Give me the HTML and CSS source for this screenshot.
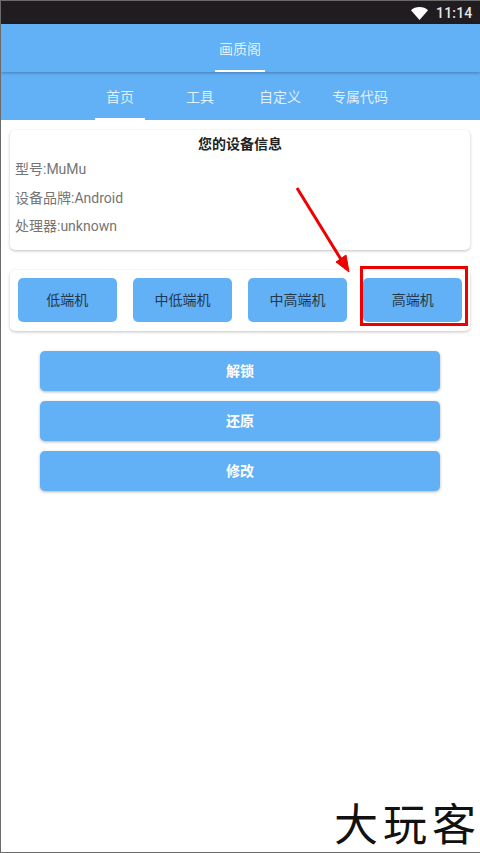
FILE: index.html
```html
<!DOCTYPE html>
<html lang="zh">
<head>
<meta charset="utf-8">
<title>画质阁</title>
<link rel="stylesheet" href="styles.css">
</head>
<body>
<div class="screen">
  <div class="status">
    <svg class="wifi" width="17" height="13" viewBox="0 0 17 13"><path d="M0 3.2C2.2 1.2 5.2 0 8.5 0s6.300 1.200 8.500 3.200L8.500 13z" fill="#fff"/></svg>
    <span class="time">11:14</span>
  </div>
  <div class="appbar"><div class="tab tab-title active">画质阁</div></div>
  <nav class="tabs">
    <div class="tab active">首页</div>
    <div class="tab">工具</div>
    <div class="tab">自定义</div>
    <div class="tab">专属代码</div>
  </nav>
  <main class="content">
    <section class="card info">
      <h1 class="info-title">您的设备信息</h1>
      <p class="info-row first">型号:MuMu</p>
      <p class="info-row">设备品牌:Android</p>
      <p class="info-row">处理器:unknown</p>
    </section>
    <section class="card tiers">
      <div class="tier">低端机</div>
      <div class="tier">中低端机</div>
      <div class="tier">中高端机</div>
      <div class="tier">高端机</div>
    </section>
    <div class="actions">
      <div class="action">解锁</div>
      <div class="action">还原</div>
      <div class="action">修改</div>
    </div>
  </main>
  <div class="mark-box"></div>
  <svg class="mark-arrow" width="70" height="95" viewBox="0 0 70 95">
    <path d="M5 2 L50 75" stroke="#f00000" stroke-width="3" fill="none"/>
    <path d="M57 86 L44 76 L54 69 Z" fill="#f00000" stroke="#f00000" stroke-width="1"/>
  </svg>
  <div class="watermark">大玩客</div>
</div>
</body>
</html>
```
FILE: styles.css
```css
* { box-sizing: border-box; }
html, body { margin: 0; padding: 0; }
body {
  width: 480px;
  height: 853px;
  overflow: hidden;
  background: #fff;
  font-family: Roboto, "Noto Sans CJK SC", sans-serif;
}
.screen {
  position: relative;
  width: 480px;
  height: 853px;
  border: 1px solid #6b6b6b;
  border-right: 0;
  background: #fff;
  overflow: hidden;
}
.status {
  height: 23px;
  background: #201c20;
  display: flex;
  align-items: center;
  justify-content: flex-end;
  padding-right: 8px;
}
.wifi { margin-right: 8px; margin-top: 1px; }
.time {
  color: #e6e6e6;
  font-size: 14px;
  font-weight: 500;
  letter-spacing: 0.2px;
  width: 35px;
  margin-right: 1px;
}
.appbar {
  height: 48px;
  background: #62b0f6;
  display: flex;
  justify-content: center;
  box-shadow: 0 1px 3px rgba(0, 0, 0, .28);
  position: relative;
}
.tabs {
  height: 48px;
  background: #62b0f6;
  display: flex;
  justify-content: center;
  padding-right: 1px;
}
.tab {
  width: 80px;
  height: 48px;
  display: flex;
  align-items: center;
  justify-content: center;
  padding-bottom: 1px;
  color: rgba(255, 255, 255, .82);
  font-size: 14px;
  position: relative;
}
.appbar .tab { padding-bottom: 0; }
.tab.active::after {
  content: "";
  position: absolute;
  left: 15px;
  bottom: 0;
  width: 50px;
  height: 2px;
  background: #fff;
}
.tab-title { margin-right: 1px; }
.content { padding: 10px 10px 0 9px; }
.card {
  background: #fff;
  border-radius: 5px;
  box-shadow: 0 1px 3px rgba(0, 0, 0, .25);
}
.info { height: 120px; padding: 6px 5px; }
.info-title {
  margin: 0;
  font-size: 14px;
  line-height: 16px;
  font-weight: 700;
  text-align: center;
  color: #222;
}
.info-row {
  margin: 0;
  font-size: 14px;
  line-height: 28.500px;
  color: #757575;
}
.info-row.first { margin-top: 3px; }
.tiers {
  margin-top: 20px;
  height: 61px;
  padding: 8px;
  display: grid;
  grid-template-columns: repeat(4, 1fr);
  column-gap: 16.500px;
  align-items: start;
}
.tier {
  height: 44px;
  border-radius: 5px;
  background: #62b0f6;
  color: #25384a;
  font-size: 14px;
  padding-bottom: 2px;
  display: flex;
  align-items: center;
  justify-content: center;
}
.actions {
  margin: 20px 30px 0;
  display: flex;
  flex-direction: column;
  gap: 10px;
}
.action {
  height: 40px;
  border-radius: 5px;
  background: #62b0f6;
  color: #fff;
  font-size: 14px;
  font-weight: 700;
  padding-bottom: 2px;
  display: flex;
  align-items: center;
  justify-content: center;
  box-shadow: 0 1px 3px rgba(0, 0, 0, .3);
}
.mark-box {
  position: absolute;
  left: 359px;
  top: 265px;
  width: 108px;
  height: 60px;
  border: 3px solid #ee0000;
}
.mark-arrow {
  position: absolute;
  left: 291px;
  top: 185px;
}
.watermark {
  position: absolute;
  left: 333px;
  top: 799px;
  font-family: "Noto Sans CJK SC", sans-serif;
  font-size: 44px;
  line-height: 44px;
  letter-spacing: 5px;
  color: #111;
  white-space: nowrap;
}
```
